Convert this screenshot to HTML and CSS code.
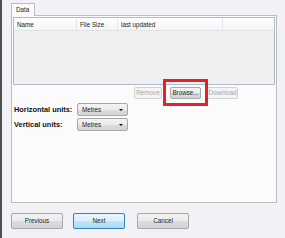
FILE: index.html
```html
<!DOCTYPE html>
<html>
<head>
<meta charset="utf-8">
<link rel="stylesheet" href="styles.css">
</head>
<body>
<div class="window">
  <div class="tabs">
    <div class="tab">Data</div>
  </div>
  <div class="panel">
    <div class="listview">
      <div class="lv-header">
        <div class="col col-name">Name</div>
        <div class="col col-size">File Size</div>
        <div class="col col-updated">last updated</div>
        <div class="col col-rest"></div>
      </div>
      <div class="lv-body"></div>
    </div>
    <div class="list-actions">
      <button class="btn small disabled btn-remove">Remove</button>
      <span class="highlight-wrap">
        <button class="btn small btn-browse">Browse...</button>
        <span class="highlight"></span>
      </span>
      <button class="btn small disabled btn-download">Download</button>
    </div>
    <div class="form">
      <div class="form-row">
        <label class="form-label">Horizontal units:</label>
        <div class="combo"><span>Metres</span><span class="arrow"></span></div>
      </div>
      <div class="form-row">
        <label class="form-label">Vertical units:</label>
        <div class="combo"><span>Metres</span><span class="arrow"></span></div>
      </div>
    </div>
  </div>
  <div class="footer">
    <button class="btn big">Previous</button>
    <button class="btn big primary">Next</button>
    <button class="btn big btn-cancel">Cancel</button>
  </div>
</div>
</body>
</html>
```
FILE: styles.css
```css
* { box-sizing: border-box; }
html, body {
  margin: 0;
  padding: 0;
  background: #f2f1f6;
}
body {
  font-family: "Liberation Sans", Arial, sans-serif;
  font-size: 6.3px;
  color: #1e1e1e;
}
.window {
  width: 285px;
  height: 238px;
  border-left: 2px solid #505050;
  display: flex;
  flex-direction: column;
}
.tabs {
  display: flex;
  padding: 3px 0 0 9px;
  height: 16px;
}
.tab {
  width: 24px;
  height: 13px;
  border: 1px solid #bdbdbd;
  border-bottom: none;
  background: #fbfbfb;
  padding: 2px 0 0 4px;
  line-height: 8px;
  position: relative;
  z-index: 1;
}
.panel {
  margin-left: 9px;
  margin-top: -1px;
  width: 266px;
  height: 188px;
  border: 1px solid #bdbdbd;
  background: #fbfbfb;
  padding: 1px;
  display: flex;
  flex-direction: column;
}
.listview {
  height: 68px;
  border: 1px solid #aebccd;
  background: #f0f0f0;
  display: flex;
  flex-direction: column;
}
.lv-header {
  display: flex;
  height: 13px;
  background: linear-gradient(#ffffff, #f3f4f6);
  border-bottom: 1px solid #dfe2e6;
}
.col {
  border-right: 1px solid #e3e5e8;
  padding: 3px 0 0 3px;
  line-height: 7px;
  white-space: nowrap;
  color: #222;
}
.col-name { width: 63px; }
.col-size { width: 41px; }
.col-updated { width: 105px; }
.col-rest { flex: 1; border-right: none; }
.lv-body { flex: 1; }

.list-actions {
  display: flex;
  padding-left: 121px;
  margin-top: 2px;
  height: 12px;
}
.btn {
  font-family: inherit;
  font-size: 6.3px;
  color: #1e1e1e;
  border: 1px solid #a8a8a8;
  border-radius: 2px;
  background: linear-gradient(#f3f3f3 0%, #ebebeb 50%, #dddddd 51%, #d3d3d3 100%);
  padding: 0;
  margin: 0;
  line-height: 1;
}
.btn.small { height: 12px; }
.btn.disabled {
  color: #a8a8a8;
  border-color: #d2d2d2;
  background: #f4f4f4;
}
.btn-remove { width: 28px; }
.highlight-wrap {
  position: relative;
  margin-left: 8px;
  display: flex;
}
.btn-browse { width: 31px; }
.highlight {
  position: absolute;
  left: -7px;
  top: -8px;
  width: 45px;
  height: 27px;
  border: 3px solid #e4202b;
}
.btn-download { width: 31px; margin-left: 6px; }

.form {
  margin-top: 4px;
  display: flex;
  flex-direction: column;
  gap: 2px;
}
.form-row {
  display: flex;
  align-items: center;
  height: 13px;
}
.form-label {
  width: 64px;
  font-weight: bold;
  font-size: 7.4px;
  padding-left: 1px;
  color: #111;
}
.combo {
  width: 51px;
  height: 13px;
  border: 1px solid #a8a8a8;
  border-radius: 2px;
  background: linear-gradient(#f3f3f3 0%, #ebebeb 50%, #dddddd 51%, #d3d3d3 100%);
  display: flex;
  align-items: center;
  justify-content: space-between;
  padding: 0 4px 0 4px;
}
.arrow {
  width: 0;
  height: 0;
  border-left: 2px solid transparent;
  border-right: 2px solid transparent;
  border-top: 2px solid #111;
}

.footer {
  display: flex;
  padding-left: 9px;
  margin-top: 10px;
  gap: 10px;
}
.btn.big {
  width: 52px;
  height: 16px;
}
.btn.primary {
  border-color: #3c7fb1;
  background: linear-gradient(#eaf6fd 0%, #d9f0fc 50%, #bee6fd 51%, #a7d9f5 100%);
}
.btn-cancel { margin-left: 2px; }
```
